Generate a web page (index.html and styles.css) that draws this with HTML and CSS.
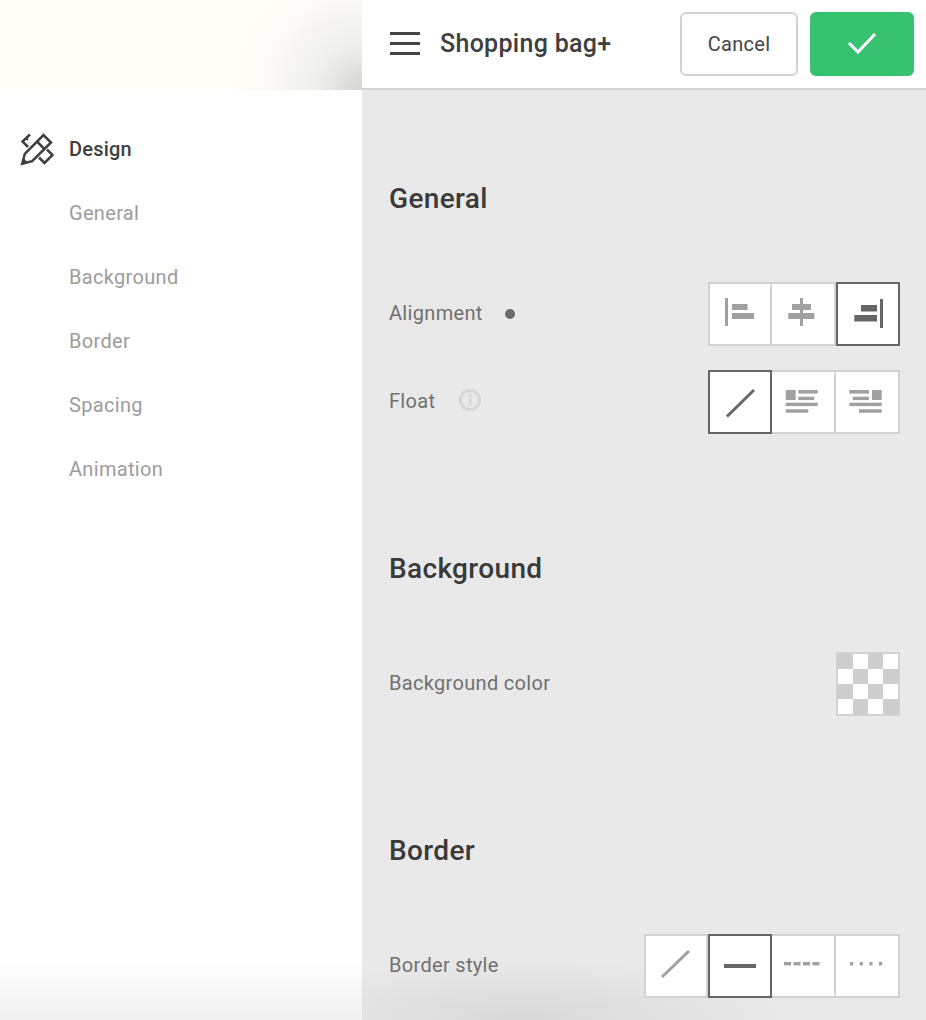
FILE: index.html
```html
<!DOCTYPE html>
<html lang="en">
<head>
<meta charset="utf-8">
<title>Shopping bag+</title>
<link rel="stylesheet" href="styles.css">
</head>
<body>
<div class="app">
  <aside class="sidebar">
    <div class="brand"></div>
    <nav class="nav">
      <div class="nav-item nav-head">
        <svg class="design-icon" width="34" height="34" viewBox="0 0 34 34" fill="none" stroke="#3f3f3f" stroke-width="2.5">
          <path d="M10 2.5 L2.5 9.5 L8 15"/>
          <path d="M6 6 L8 8" stroke-width="2"/>
          <path d="M27 17.5 L32.5 23 L24.5 31 L19 25.5"/>
          <path d="M2.2 31.8 L4.8 21.8 L23.5 3 L31 10.5 L12.2 29.2 Z"/>
          <path d="M17 9.5 L24.5 17"/>
          <path d="M1.5 32.5 L3.2 25.8 L8.2 30.8 Z" fill="#3f3f3f" stroke="none"/>
        </svg>
        <span>Design</span>
      </div>
      <div class="nav-item">General</div>
      <div class="nav-item">Background</div>
      <div class="nav-item">Border</div>
      <div class="nav-item">Spacing</div>
      <div class="nav-item">Animation</div>
    </nav>
  </aside>
  <div class="panel">
    <header class="topbar">
      <svg class="menu-icon" width="30" height="24" viewBox="0 0 30 24" fill="#444"><rect y="0" width="30" height="3"/><rect y="10" width="30" height="3"/><rect y="20" width="30" height="3"/></svg>
      <h1 class="title">Shopping bag+</h1>
      <button class="btn-cancel">Cancel</button>
      <button class="btn-ok"><svg width="32" height="24" viewBox="0 0 32 24" fill="none" stroke="#fff" stroke-width="3"><path d="M3 12 L12 21 L29 3"/></svg></button>
    </header>
    <main class="content">
      <section class="section">
        <h2>General</h2>
        <div class="rows">
          <div class="row">
            <span class="label">Alignment</span><span class="dot"></span>
            <div class="seg">
              <div class="opt"><svg width="32" height="32" viewBox="0 2 32 32" fill="#a0a0a0"><rect x="1" y="1" width="3" height="29"/><rect x="8" y="8" width="15.5" height="6"/><rect x="8" y="17" width="22" height="6"/></svg></div>
              <div class="opt"><svg width="32" height="32" viewBox="0 2 32 32" fill="#a0a0a0"><rect x="13" y="1" width="3" height="29"/><rect x="5" y="8" width="19" height="6"/><rect x="1.3" y="17" width="26" height="6"/></svg></div>
              <div class="opt on"><svg width="32" height="32" viewBox="0 0 32 32" fill="#666"><rect x="28" y="1" width="3" height="29"/><rect x="9" y="7" width="16" height="6.5"/><rect x="2.3" y="17" width="22.7" height="6.5"/></svg></div>
            </div>
          </div>
          <div class="row">
            <span class="label">Float</span>
            <svg class="info" width="24" height="24" viewBox="0 0 24 24" fill="none"><circle cx="12" cy="12" r="9.5" stroke="#d6d6d6" stroke-width="3"/><rect x="10.7" y="10.5" width="2.6" height="7" fill="#d6d6d6"/><rect x="10.7" y="6.5" width="2.6" height="2.6" fill="#d6d6d6"/></svg>
            <div class="seg">
              <div class="opt on"><svg width="32" height="32" viewBox="0 0 32 32" fill="none" stroke="#666" stroke-width="3"><path d="M3 30.5 L30 4"/></svg></div>
              <div class="opt"><svg width="36" height="24" viewBox="0 0 36 24" fill="#a0a0a0"><rect x="0.7" y="0" width="10" height="10"/><rect x="13.3" y="0" width="19.4" height="3.6"/><rect x="13.3" y="6.7" width="16" height="3.4"/><rect x="0.7" y="12.7" width="32" height="3.4"/><rect x="0.7" y="19.3" width="22.6" height="3.4"/></svg></div>
              <div class="opt"><svg width="36" height="24" viewBox="0 0 36 24" fill="#a0a0a0"><rect x="23" y="0" width="9.7" height="10"/><rect x="0.3" y="0" width="19.7" height="3.6"/><rect x="3.7" y="6.7" width="16.3" height="3.4"/><rect x="0.3" y="12.7" width="32.4" height="3.4"/><rect x="10" y="19.3" width="22.7" height="3.4"/></svg></div>
            </div>
          </div>
        </div>
      </section>
      <section class="section">
        <h2>Background</h2>
        <div class="rows">
          <div class="row">
            <span class="label">Background color</span>
            <div class="swatch"></div>
          </div>
        </div>
      </section>
      <section class="section">
        <h2>Border</h2>
        <div class="rows">
          <div class="row">
            <span class="label">Border style</span>
            <div class="seg">
              <div class="opt"><svg width="32" height="32" viewBox="0 0 32 32" fill="none" stroke="#a0a0a0" stroke-width="3"><path d="M2 27 L29 1"/></svg></div>
              <div class="opt on"><svg class="raise-bar" width="32" height="4" viewBox="0 0 32 4" fill="#666"><rect width="32" height="4"/></svg></div>
              <div class="opt"><svg class="raise-dash" width="36" height="4" viewBox="0 0 36 4" fill="#a0a0a0"><rect width="7" height="3.4"/><rect x="9.5" width="7" height="3.4"/><rect x="19" width="7" height="3.4"/><rect x="28.5" width="7" height="3.4"/></svg></div>
              <div class="opt"><svg class="raise-dots" width="34" height="4" viewBox="0 0 34 4" fill="#a0a0a0"><rect width="3.2" height="3.4"/><rect x="9.7" width="3.2" height="3.4"/><rect x="19.3" width="3.2" height="3.4"/><rect x="29" width="3.2" height="3.4"/></svg></div>
            </div>
          </div>
        </div>
      </section>
    </main>
  </div>
</div>
</body>
</html>
```
FILE: styles.css
```css
* { box-sizing: border-box; }
html, body { margin: 0; height: 100%; overflow: hidden; }
body { font-family: Roboto, "Liberation Sans", sans-serif; color: #3f3f3f; }
.app { display: flex; width: 926px; height: 1020px; overflow: hidden; }

.sidebar {
  width: 362px; flex: none; display: flex; flex-direction: column;
  background: linear-gradient(to bottom, #fff 955px, #f1f1f1 1020px);
}
.brand {
  height: 90px; flex: none;
  background: radial-gradient(circle 130px at 100% 100%, #d4d4d2 0%, #efefec 35%, #fbfaf6 75%, #fffdf8 100%), #fffdf8;
}
.nav { padding-top: 27px; }
.nav-item { height: 64px; display: flex; align-items: center; padding-left: 69px; font-size: 20px; color: #9c9c9c; letter-spacing: .32px; }
.nav-head { position: relative; color: #3f3f3f; font-weight: 500; letter-spacing: .2px; }
.design-icon { position: absolute; left: 20px; top: 15px; }

.panel { flex: 1; display: flex; flex-direction: column; min-width: 0; }
.topbar {
  height: 90px; flex: none; display: flex; align-items: center;
  background: #fff; border-bottom: 2px solid #d5d5d5; padding: 0 12px 0 28px;
}
.menu-icon { flex: none; }
.title { flex: 1; margin: 0 0 0 20px; font-size: 25px; font-weight: 500; color: #3f3f3f; letter-spacing: .3px; padding-bottom: 2px; }
.btn-cancel {
  width: 118px; height: 64px; margin-right: 12px; background: #fff; border: 2px solid #d2d2d2; border-radius: 6px;
  font: 400 20px Roboto, sans-serif; color: #444; letter-spacing: .3px;
}
.btn-ok { width: 104px; height: 64px; background: #37c272; border: 0; border-radius: 6px; display: flex; align-items: center; justify-content: center; padding: 0 0 2px; }

.content {
  flex: 1; overflow: hidden; padding: 0 26px 0 27px;
  background: radial-gradient(ellipse 260px 62px at 160px 100%, #d8d8d8 0%, #e9e9e9 100%) #e9e9e9;
}
.section { padding-top: 90px; }
.section + .section { padding-top: 116px; }
h2 { margin: 0 0 64px; font-size: 28px; line-height: 38px; font-weight: 500; color: #3a3a3a; letter-spacing: .35px; }
.rows { display: flex; flex-direction: column; gap: 24px; }
.row { display: flex; align-items: center; height: 64px; }
.label { font-size: 20px; color: #707070; letter-spacing: .32px; padding-bottom: 2px; }
.dot { width: 10px; height: 10px; border-radius: 50%; background: #6b6b6b; margin: 0 0 1px 22px; }
.info { margin: 0 0 5px 23px; }
.seg { margin-left: auto; display: flex; }
.opt {
  width: 64px; height: 64px; background: #fff; border: 2px solid #d2d2d2; border-left: 0;
  display: flex; align-items: center; justify-content: center;
}
.opt:first-child { border-left: 2px solid #d2d2d2; }
.opt.on { border: 2px solid #666; }
.raise-bar { margin-bottom: 1px; }
.raise-dash { margin: 0 2px 5px 0; }
.raise-dots { margin: 0 1px 5px 0; }
.swatch {
  margin-left: auto; width: 64px; height: 64px; border: 2px solid #d2d2d2;
  background: repeating-conic-gradient(#fff 0 25%, #cdcdcd 0 50%) 0 0 / 30px 30px;
}
```
